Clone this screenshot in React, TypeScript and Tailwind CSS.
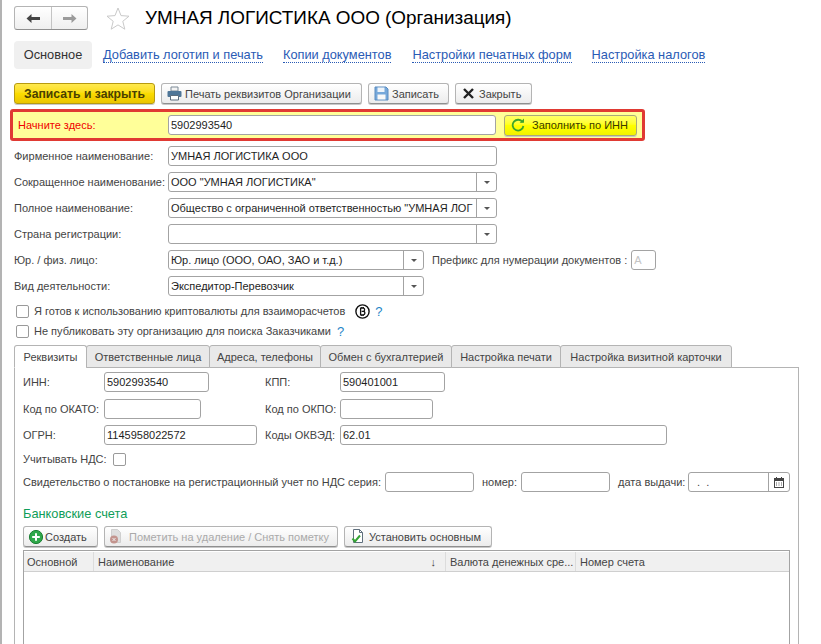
import type { ReactNode } from "react";

function Btn({ className = "", tone = "from-white to-[#ececec] border-[#b4b4b4] border-b-[#8f8f8f]", children }: { className?: string; tone?: string; children: ReactNode }) {
  return (
    <div
      className={`flex h-[21px] shrink-0 items-center whitespace-nowrap rounded-[3px] border bg-gradient-to-b shadow-[0_1px_0_#c8c8c8] ${tone} ${className}`}
    >
      {children}
    </div>
  );
}

function Field({ className = "", value = "", muted = false }: { className?: string; value?: string; muted?: boolean }) {
  return (
    <div
      className={`flex h-[20px] shrink-0 items-center overflow-hidden whitespace-nowrap rounded-[3px] border border-[#a3a3a3] bg-white pl-[2px] ${muted ? "text-[#c4c4c4]" : "text-[#1e1e1e]"} ${className}`}
    >
      {value}
    </div>
  );
}

function Select({ className = "", value = "" }: { className?: string; value?: string }) {
  return (
    <div className={`flex h-[20px] shrink-0 items-center rounded-[3px] border border-[#a3a3a3] bg-white pl-[2px] text-[#1e1e1e] ${className}`}>
      <span className="min-w-0 flex-1 overflow-hidden whitespace-nowrap">{value}</span>
      <span className="flex h-full w-[20px] shrink-0 items-center justify-center border-l border-[#a3a3a3]">
        <span className="h-0 w-0 border-x-[3px] border-t-[3px] border-x-transparent border-t-[#555]" />
      </span>
    </div>
  );
}

function FormRow({ label, children }: { label: string; children: ReactNode }) {
  return (
    <div className="flex h-[20px] items-center">
      <span className="w-[154px] shrink-0 whitespace-nowrap">{label}</span>
      {children}
    </div>
  );
}

function Check() {
  return <span className="block h-[13px] w-[13px] shrink-0 rounded-[2px] border border-[#9a9a9a] bg-white" />;
}

function Help() {
  return <span className="text-[13px] leading-none text-[#1f86c7]">?</span>;
}

function Link({ children, className = "" }: { children: ReactNode; className?: string }) {
  return <span className={`whitespace-nowrap border-b border-dotted border-[#2a5bb5] text-[12.800px] leading-[14px] text-[#2a5bb5] ${className}`}>{children}</span>;
}

function Tab({ children, active = false, className = "" }: { children: ReactNode; active?: boolean; className?: string }) {
  return (
    <div
      className={`-ml-px flex h-[23px] shrink-0 items-center justify-center whitespace-nowrap rounded-t-[3px] border border-[#b4b4b4] ${active ? "border-b-white bg-white" : "bg-[#e9e9e9]"} ${className}`}
    >
      {children}
    </div>
  );
}

function Arrow({ color, flip = false }: { color: string; flip?: boolean }) {
  return (
    <svg width="14" height="11" viewBox="0 0 14 11" className={flip ? "-scale-x-100" : ""}>
      <path d="M0.500 5.500 L5.500 1 V4 H14 V7 H5.500 V10 Z" fill={color} />
    </svg>
  );
}

function PrinterIcon() {
  return (
    <svg width="15" height="15" viewBox="0 0 15 15">
      <path d="M4 1h7v4H4z" fill="#f4f4f4" stroke="#7c8a96" />
      <rect x="0.500" y="5" width="14" height="6" rx="1" fill="#4f7698" />
      <path d="M3.500 9.500h8v4.500h-8z" fill="#fff" stroke="#5b6d7e" />
    </svg>
  );
}

function SaveIcon() {
  return (
    <svg width="15" height="15" viewBox="0 0 15 15">
      <path d="M1 1h11l2 2v11H1z" fill="#76a8da" stroke="#5a8cc0" />
      <rect x="3.500" y="1.500" width="7" height="4.500" fill="#eef4fa" />
      <rect x="3.500" y="8.500" width="8" height="5" fill="#f8f8f8" />
    </svg>
  );
}

function RefreshIcon() {
  return (
    <svg width="14" height="14" viewBox="0 0 14 14" fill="none">
      <path d="M11.600 4.200A5.400 5.400 0 1 0 12.400 8" stroke="#3da52b" strokeWidth="1.800" />
      <path d="M8.600 4.800H13V0.600Z" fill="#3da52b" />
    </svg>
  );
}

function BitcoinIcon() {
  return (
    <svg width="15" height="15" viewBox="0 0 15 15" fill="none">
      <circle cx="7.500" cy="7.500" r="6.600" stroke="#111" strokeWidth="1.400" />
      <path d="M5.600 4.200h2.600c1.900 0 1.900 3 0 3.200 2.300 0 2.300 3.400 0 3.400H5.600ZM6.700 7.400h1.600M6.800 3v1.200M6.800 10.800V12M8.400 3v1.200M8.400 10.800V12" stroke="#111" strokeWidth="1.300" />
    </svg>
  );
}

function PlusIcon() {
  return (
    <svg width="14" height="14" viewBox="0 0 14 14">
      <circle cx="7" cy="7" r="6.600" fill="#2fa84a" stroke="#1d7f35" />
      <path d="M7 3.200v7.600M3.200 7h7.600" stroke="#fff" strokeWidth="2" />
    </svg>
  );
}

function DocMarkIcon() {
  return (
    <svg width="14" height="15" viewBox="0 0 14 15">
      <path d="M2.500 0.500h6l3 3v10h-9z" fill="#dedede" stroke="#cfcfcf" />
      <circle cx="5" cy="10.500" r="4" fill="#c3948e" />
      <path d="M3.500 9l3 3M6.500 9l-3 3" stroke="#eee" />
    </svg>
  );
}

function DocCheckIcon() {
  return (
    <svg width="14" height="15" viewBox="0 0 14 15" fill="none">
      <path d="M2.500 0.500h6l3 3v10h-9z" fill="#fff" stroke="#5f6f7d" />
      <path d="M8.500 0.500v3h3" stroke="#5f6f7d" />
      <path d="M1.500 9.500l2.500 3 5-6" stroke="#35a335" strokeWidth="2" />
    </svg>
  );
}

function CalendarIcon() {
  return (
    <svg width="10" height="11" viewBox="0 0 10 11">
      <rect x="0.500" y="1.500" width="9" height="9" fill="#fff" stroke="#444" />
      <rect x="0" y="1" width="10" height="3" fill="#444" />
      <path d="M2.500 0v2M7.500 0v2" stroke="#444" />
      <path d="M2 6h1M4.500 6h1M7 6h1M2 8h1M4.500 8h1M7 8h1" stroke="#555" />
    </svg>
  );
}

export default function App() {
  return (
    <div className="h-[644px] w-[821px] overflow-hidden bg-white text-[11px] leading-[14px] text-[#444] [font-family:'Liberation_Sans',Arial,sans-serif]">
      <div className="flex h-full border-l-[2px] border-[#b3b3b3]">
        <div className="flex w-[796px] shrink-0 flex-col pl-[12px] pt-[6px]">
          {/* заголовок */}
          <div className="flex h-[24px] items-center">
            <div className="flex h-[24px] w-[74px] rounded-[3px] border border-[#b4b4b4] border-b-[#8f8f8f] bg-gradient-to-b from-white to-[#efefef]">
              <span className="flex w-[37px] items-center justify-center border-r border-[#c4c4c4]">
                <Arrow color="#444" />
              </span>
              <span className="flex flex-1 items-center justify-center">
                <Arrow color="#9b9b9b" flip />
              </span>
            </div>
            <svg width="24" height="23" viewBox="0 0 24 23" className="ml-[18px]" fill="#fff" stroke="#c9c9c9">
              <path d="M12 1l3 7.600 8 .6-6.200 5.100 2 7.900L12 17.900 5.200 22.200l2-7.900L1 9.200l8-.6Z" />
            </svg>
            <h1 className="ml-[15px] whitespace-nowrap text-[18.900px] font-normal text-black">УМНАЯ ЛОГИСТИКА ООО (Организация)</h1>
          </div>

          {/* панель разделов */}
          <div className="mt-[11px] flex h-[28px] items-center">
            <div className="flex h-[28px] w-[78px] items-center justify-center rounded-[4px] bg-[#f0f0f0] text-[12.800px] text-[#333]">Основное</div>
            <Link className="ml-[11px]">Добавить логотип и печать</Link>
            <Link className="ml-[20px]">Копии документов</Link>
            <Link className="ml-[21px]">Настройки печатных форм</Link>
            <Link className="ml-[20px]">Настройка налогов</Link>
          </div>

          {/* команды */}
          <div className="mt-[14px] flex gap-[6px]">
            <Btn
              tone="from-[#ffe94d] via-[#fbdc00] to-[#ebc400] border-[#b79a10]"
              className="w-[141px] justify-center text-[12.200px] font-bold text-[#4a3f00]"
            >
              Записать и закрыть
            </Btn>
            <Btn className="w-[201px] gap-[3px] pl-[5px]">
              <PrinterIcon />
              Печать реквизитов Организации
            </Btn>
            <Btn className="w-[81px] gap-[3px] pl-[5px]">
              <SaveIcon />
              Записать
            </Btn>
            <Btn className="w-[77px] gap-[5px] pl-[7px]">
              <svg width="11" height="11" viewBox="0 0 11 11">
                <path d="M1 1l9 9M10 1l-9 9" stroke="#222" strokeWidth="2.400" />
              </svg>
              Закрыть
            </Btn>
          </div>

          {/* начните здесь */}
          <div className="-ml-[4px] mt-[5px] flex h-[32px] w-[635px] items-center rounded-[3px] border-[3px] border-[#e03a33] bg-[#ffff99] pl-[5px]">
            <span className="w-[150px] shrink-0 text-[#f00000]">Начните здесь:</span>
            <Field className="w-[328px]" value="5902993540" />
            <Btn
              tone="from-[#ffff66] via-[#ffff00] to-[#f2f200] border-[#a9a97a]"
              className="ml-[8px] w-[133px] gap-[7px] pl-[6px] text-[#3a3a00]"
            >
              <RefreshIcon />
              Заполнить по ИНН
            </Btn>
          </div>

          {/* реквизиты организации */}
          <div className="mt-[5px] flex flex-col gap-[6px]">
            <FormRow label="Фирменное наименование:">
              <Field className="w-[329px]" value="УМНАЯ ЛОГИСТИКА ООО" />
            </FormRow>
            <FormRow label="Сокращенное наименование:">
              <Select className="w-[329px]" value={'ООО "УМНАЯ ЛОГИСТИКА"'} />
            </FormRow>
            <FormRow label="Полное наименование:">
              <Select className="w-[329px]" value={'Общество с ограниченной ответственностью "УМНАЯ ЛОГ'} />
            </FormRow>
            <FormRow label="Страна регистрации:">
              <Select className="w-[329px]" />
            </FormRow>
            <FormRow label="Юр. / физ. лицо:">
              <Select className="w-[256px]" value="Юр. лицо (ООО, ОАО, ЗАО и т.д.)" />
              <span className="ml-[8px] whitespace-nowrap">Префикс для нумерации документов :</span>
              <Field className="ml-[4px] w-[25px]" value="А" muted />
            </FormRow>
            <FormRow label="Вид деятельности:">
              <Select className="w-[256px]" value="Экспедитор-Перевозчик" />
            </FormRow>
          </div>

          <div className="ml-[2px] mt-[8px] flex h-[14px] items-center">
            <Check />
            <span className="ml-[5px] whitespace-nowrap">Я готов к использованию криптовалюты для взаиморасчетов</span>
            <span className="ml-[10px] mr-[5px]"><BitcoinIcon /></span>
            <Help />
          </div>
          <div className="ml-[2px] mt-[6px] flex h-[14px] items-center">
            <Check />
            <span className="ml-[5px] mr-[6px] whitespace-nowrap">Не публиковать эту организацию для поиска Заказчиками</span>
            <Help />
          </div>

          {/* вкладки */}
          <div className="relative z-10 ml-[1px] mt-[7px] flex">
            <Tab active className="w-[73px]">Реквизиты</Tab>
            <Tab className="w-[124px]">Ответственные лица</Tab>
            <Tab className="w-[112px]">Адреса, телефоны</Tab>
            <Tab className="w-[132px]">Обмен с бухгалтерией</Tab>
            <Tab className="w-[110px]">Настройка печати</Tab>
            <Tab className="w-[172px]">Настройка визитной карточки</Tab>
          </div>

          <div className="-mt-px flex min-h-0 w-[785px] flex-1 flex-col border-x border-t border-[#b4b4b4] pl-[8px] pr-[8px] pt-[4px]">
            <div className="flex h-[20px] items-center">
              <span className="w-[81px] shrink-0">ИНН:</span>
              <Field className="w-[105px]" value="5902993540" />
              <span className="ml-[56px] w-[75px] shrink-0">КПП:</span>
              <Field className="w-[105px]" value="590401001" />
            </div>
            <div className="mt-[7px] flex h-[20px] items-center">
              <span className="w-[81px] shrink-0 whitespace-nowrap">Код по ОКАТО:</span>
              <Field className="w-[97px]" />
              <span className="ml-[64px] w-[75px] shrink-0 whitespace-nowrap">Код по ОКПО:</span>
              <Field className="w-[93px]" />
            </div>
            <div className="mt-[6px] flex h-[20px] items-center">
              <span className="w-[81px] shrink-0">ОГРН:</span>
              <Field className="w-[153px]" value="1145958022572" />
              <span className="ml-[8px] w-[75px] shrink-0 whitespace-nowrap">Коды ОКВЭД:</span>
              <Field className="w-[327px]" value="62.01" />
            </div>
            <div className="mt-[7px] flex h-[14px] items-center">
              <span className="w-[90px] shrink-0 whitespace-nowrap">Учитывать НДС:</span>
              <Check />
            </div>
            <div className="mt-[6px] flex h-[20px] items-center">
              <span className="w-[362px] shrink-0 whitespace-nowrap">Свидетельство о постановке на регистрационный учет по НДС серия:</span>
              <Field className="w-[89px]" />
              <span className="ml-[8px] w-[39px] shrink-0">номер:</span>
              <Field className="w-[89px]" />
              <span className="ml-[8px] w-[70px] shrink-0 whitespace-nowrap">дата выдачи:</span>
              <div className="flex h-[20px] w-[102px] shrink-0 items-center rounded-[3px] border border-[#a3a3a3] bg-white pl-[8px]">
                <span className="flex-1 whitespace-pre">.  .</span>
                <span className="flex h-full w-[21px] items-center justify-center border-l border-[#a3a3a3]">
                  <CalendarIcon />
                </span>
              </div>
            </div>

            <div className="mt-[14px] text-[12.800px] leading-[15px] text-[#0f9d58]">Банковские счета</div>

            <div className="mt-[5px] flex gap-[6px]">
              <Btn className="w-[75px] gap-[2px] pl-[5px]">
                <PlusIcon />
                Создать
              </Btn>
              <Btn className="w-[234px] gap-[6px] pl-[4px] text-[#aaa]">
                <DocMarkIcon />
                Пометить на удаление / Снять пометку
              </Btn>
              <Btn className="w-[148px] gap-[4px] pl-[6px]">
                <DocCheckIcon />
                Установить основным
              </Btn>
            </div>

            <div className="mt-[3px] min-h-0 flex-1 border border-b-0 border-[#a3a3a3] pt-[1px]">
              <div className="flex h-[20px] border-b border-[#cfcfcf] bg-[#f0f0f0]">
                <span className="flex w-[70px] items-center border-r border-[#dcdcdc] pl-[3px]">Основной</span>
                <span className="flex w-[352px] items-center justify-between border-r border-[#dcdcdc] pl-[4px] pr-[9px]">
                  Наименование
                  <span className="text-[11px]">↓</span>
                </span>
                <span className="flex w-[130px] items-center overflow-hidden whitespace-nowrap border-r border-[#dcdcdc] pl-[4px]">Валюта денежных сре...</span>
                <span className="flex flex-1 items-center pl-[4px]">Номер счета</span>
              </div>
            </div>
          </div>
        </div>
      </div>
    </div>
  );
}
